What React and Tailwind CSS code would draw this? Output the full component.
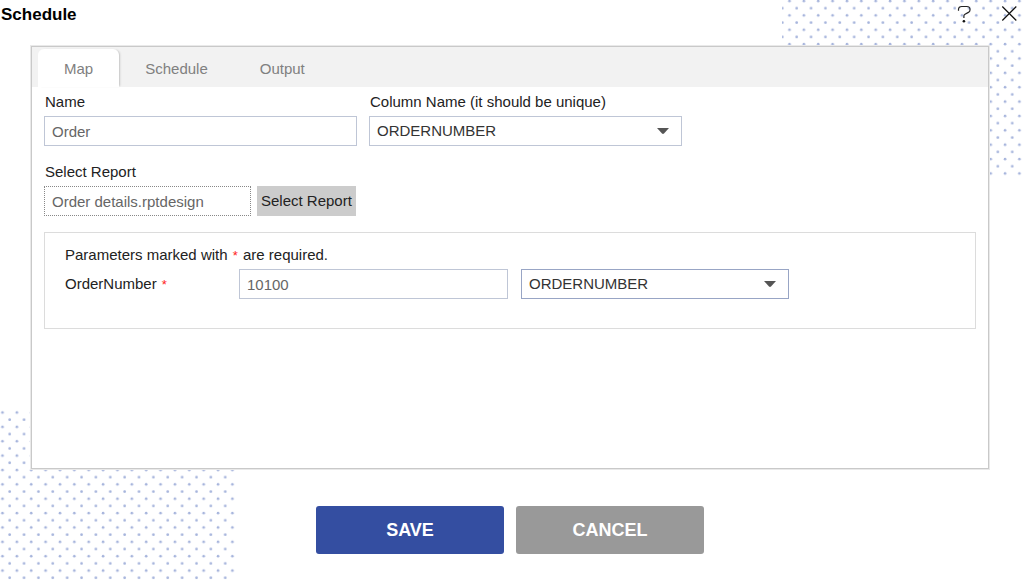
import { useState } from "react";

const TABS = ["Map", "Schedule", "Output"];

function DotField({ id, x, y, className }) {
  return (
    <svg aria-hidden="true" className={`pointer-events-none absolute ${className}`}>
      <defs>
        <pattern id={id} x={x} y={y} width="14.37" height="14.37" patternUnits="userSpaceOnUse">
          <circle cx="3" cy="3" r="1.35" fill="#a6b4dc" />
          <circle cx="10.18" cy="10.18" r="1.35" fill="#a6b4dc" />
        </pattern>
      </defs>
      <rect width="100%" height="100%" fill={`url(#${id})`} />
    </svg>
  );
}

function Field({ label, htmlFor, className = "", children }) {
  return (
    <div className={`flex flex-col gap-1 ${className}`}>
      <label htmlFor={htmlFor} className="pl-px leading-5">
        {label}
      </label>
      {children}
    </div>
  );
}

function TextInput({ className = "border-[#bfc6d6]", ...props }) {
  return (
    <input
      type="text"
      className={`h-[30px] w-full border bg-white px-[7px] pt-px text-[#666] outline-none ${className}`}
      {...props}
    />
  );
}

function ColumnSelect({ id, label, className = "border-[#bfc6d6]" }) {
  return (
    <div className="relative w-full">
      <select
        id={id}
        aria-label={label}
        className={`block h-[30px] w-full appearance-none border bg-white pr-8 pl-[7px] text-[#333] outline-none ${className}`}
      >
        <option>ORDERNUMBER</option>
      </select>
      <svg
        aria-hidden="true"
        viewBox="0 0 12 6"
        className="pointer-events-none absolute top-3 right-[13px] h-[6px] w-3"
      >
        <path d="M0 0h12L7 5.5Q6 6.4 5 5.5Z" fill="#555" />
      </svg>
    </div>
  );
}

function Required() {
  return <span className="px-px text-[13px] leading-none text-[#f22]">*</span>;
}

export default function App() {
  const [active, setActive] = useState("Map");

  return (
    <div className="relative flex min-h-screen flex-col overflow-hidden bg-white font-['Liberation_Sans',Arial,sans-serif] text-[15px] text-[#222]">
      <DotField id="dots-top" x="4.5" y="-2" className="top-0 right-0 h-[179px] w-[243px]" />
      <DotField id="dots-bottom" x="-0.5" y="-0.5" className="bottom-0 left-0 h-[171px] w-[238px]" />

      <header className="relative flex h-[46px] items-start justify-between pr-2 pl-px">
        <h1 className="pt-1 text-[17px] leading-[22px] font-bold text-black">Schedule</h1>
        <div className="flex gap-[30px] pt-[5px]">
          <button type="button" aria-label="Help" className="h-[18px] w-[14px]">
            <svg viewBox="0 0 14 18" className="h-[18px] w-[14px]" fill="none">
              <path
                d="M1.5 5.8V4.6Q1.5 1.5 4.8 1.5H9.8Q13 1.5 13 4.4V4.9Q13 6.6 11.4 7.4L8 9.2Q6.9 9.8 6.9 11V13"
                stroke="#222"
                strokeWidth="1.2"
              />
              <circle cx="6.9" cy="16.3" r="1.3" fill="#111" />
            </svg>
          </button>
          <button type="button" aria-label="Close" className="h-[18px] w-4">
            <svg viewBox="0 0 16 18" className="h-[18px] w-4" fill="none">
              <path d="M1.3 1.5L15.3 15.5M15.3 1.5L1.3 15.5" stroke="#111" strokeWidth="1.2" />
            </svg>
          </button>
        </div>
      </header>

      <main className="relative flex flex-1 flex-col pr-9 pl-[31px]">
        <section className="flex flex-1 flex-col border border-[#c9c9c9] bg-white shadow-[0_0_0_1px_#e9e9e9]">
          <div role="tablist" className="flex h-10 bg-[#f2f2f2] pt-[2px] pl-[6px]">
            {TABS.map((tab) => (
              <button
                key={tab}
                type="button"
                role="tab"
                aria-selected={active === tab}
                onClick={() => setActive(tab)}
                className={`px-[26px] pt-[2px] text-[#808080] ${
                  active === tab
                    ? "rounded-t-md bg-white shadow-[2px_0_2px_-1px_#c4c4c4]"
                    : ""
                }`}
              >
                {tab}
              </button>
            ))}
          </div>

          <form className="flex flex-col gap-4 px-3 pt-[5px] pb-4">
            <div className="flex gap-3">
              <Field label="Name" htmlFor="name" className="max-w-[313px] flex-1">
                <TextInput id="name" defaultValue="Order" />
              </Field>
              <Field
                label="Column Name (it should be unique)"
                htmlFor="column"
                className="max-w-[313px] flex-1"
              >
                <ColumnSelect id="column" />
              </Field>
            </div>

            <Field label="Select Report" htmlFor="report">
              <div className="flex gap-[6px]">
                <div className="w-[207px]">
                  <TextInput
                    id="report"
                    readOnly
                    defaultValue="Order details.rptdesign"
                    className="border-dotted border-[#888]"
                  />
                </div>
                <button type="button" className="h-[30px] bg-[#ccc] px-1 whitespace-nowrap">
                  Select Report
                </button>
              </div>
            </Field>

            <div className="flex flex-col gap-1 border border-[#dcdcdc] px-5 pt-3 pb-[29px]">
              <p className="leading-5">
                Parameters marked with <Required /> are required.
              </p>
              <div className="flex items-center gap-[13px]">
                <label htmlFor="order-number" className="w-[161px] leading-5">
                  OrderNumber <Required />
                </label>
                <div className="max-w-[269px] flex-1">
                  <TextInput id="order-number" defaultValue="10100" />
                </div>
                <div className="max-w-[268px] flex-1">
                  <ColumnSelect
                    id="order-number-column"
                    label="OrderNumber column"
                    className="border-[#98a5c5]"
                  />
                </div>
              </div>
            </div>
          </form>
        </section>
      </main>

      <footer className="relative flex justify-center gap-3 pt-[37px] pr-[5px] pb-[27px] text-[18px] font-bold text-white">
        <button type="button" className="h-12 w-[188px] rounded-[3px] bg-[#344ea1]">
          SAVE
        </button>
        <button type="button" className="h-12 w-[188px] rounded-[3px] bg-[#999]">
          CANCEL
        </button>
      </footer>
    </div>
  );
}
